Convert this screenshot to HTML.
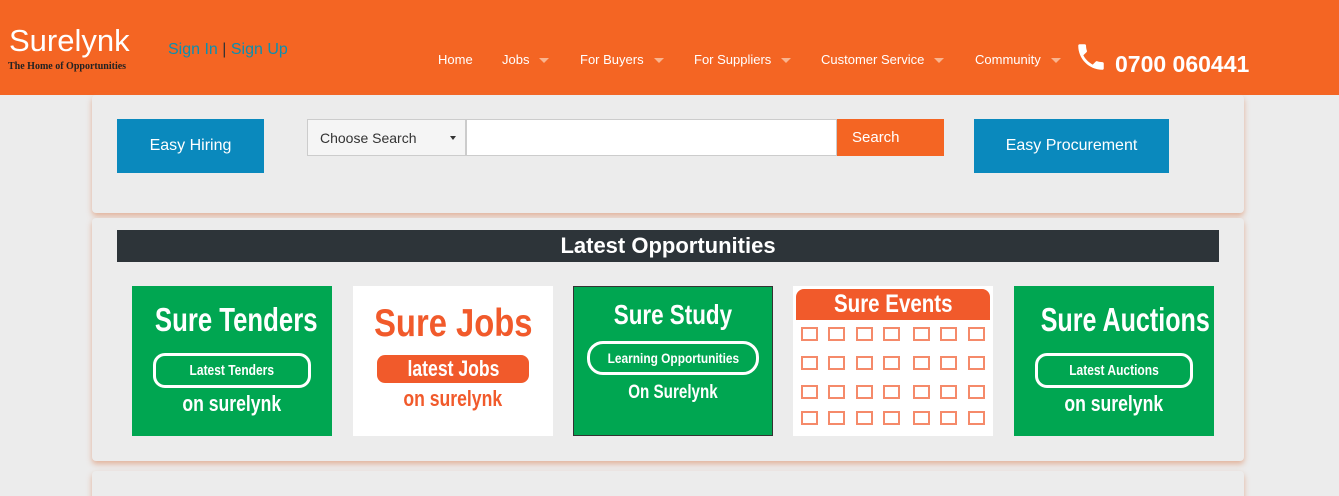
<!DOCTYPE html><html><head><style>
*{margin:0;padding:0;box-sizing:border-box}
html,body{width:1339px;height:496px;overflow:hidden}
body{background:#ececec;font-family:"Liberation Sans",sans-serif;position:relative}
.hdr{position:absolute;left:0;top:0;width:1339px;height:95px;background:#f46523}
.abs{position:absolute}
.nav{color:#fff;font-size:13px;top:52px}
.car{display:inline-block;width:0;height:0;border-left:5px solid transparent;border-right:5px solid transparent;border-top:5px solid #f9b48f;margin-left:10px;vertical-align:middle}
.panel{position:absolute;left:92px;width:1152px;background:#ececec;border-radius:4px;box-shadow:0 3px 6px rgba(220,140,100,.6)}
.tile{position:absolute;top:286px;width:200px;height:150px;text-align:center;font-weight:bold;color:#fff;overflow:hidden;white-space:nowrap}
.tile>div{display:block}
.n{display:inline-block;transform:scaleX(.8);transform-origin:center}
.g{background:#00a651}
.pill{margin:0 auto;border:3px solid #fff;border-radius:12px;font-size:15px}
.cell{position:absolute;width:17px;height:14px;border:2px solid #f58a6a}
</style></head><body>
<div class="hdr"></div>
<div class="abs" style="left:9px;top:23px;color:#fff;font-size:31px;">Surelynk</div>
<div class="abs" style="left:8px;top:61px;color:#222;font-size:10px;font-family:'Liberation Serif',serif;font-weight:bold">The Home of Opportunities</div>
<div class="abs" style="left:168px;top:41px;font-size:16px;color:#0a8fb0">Sign In <span style="color:#333">|</span> Sign Up</div>
<div class="abs nav" style="left:438px">Home</div>
<div class="abs nav" style="left:502px">Jobs<span class="car"></span></div>
<div class="abs nav" style="left:580px">For Buyers<span class="car"></span></div>
<div class="abs nav" style="left:694px">For Suppliers<span class="car"></span></div>
<div class="abs nav" style="left:821px">Customer Service<span class="car"></span></div>
<div class="abs nav" style="left:975px">Community<span class="car"></span></div>
<svg class="abs" style="left:1074px;top:40px" width="34" height="34" viewBox="0 0 24 24"><path fill="#fff" d="M6.6 10.8c1.4 2.8 3.8 5.1 6.6 6.6l2.2-2.2c.3-.3.7-.4 1-.2 1.1.4 2.3.6 3.6.6.6 0 1 .4 1 1V20c0 .6-.4 1-1 1C10.6 21 3 13.4 3 4c0-.6.4-1 1-1h3.5c.6 0 1 .4 1 1 0 1.3.2 2.5.6 3.6.1.3 0 .7-.2 1z"/></svg>
<div class="abs" style="left:1115px;top:51px;color:#fff;font-size:23px;font-weight:bold">0700 060441</div>

<div class="panel" style="top:95px;height:118px"></div>
<div class="abs" style="left:117px;top:119px;width:147px;height:54px;background:#0a89bd;color:#fff;font-size:16px;line-height:54px;text-align:center">Easy Hiring</div>
<div class="abs" style="left:307px;top:119px;width:159px;height:37px;background:#f5f5f5;border:1px solid #ccc;font-size:14px;color:#333;line-height:36px;padding-left:12px">Choose Search<span style="position:absolute;right:9px;top:16px;border-left:3px solid transparent;border-right:3px solid transparent;border-top:4px solid #333"></span></div>
<div class="abs" style="left:466px;top:119px;width:371px;height:37px;background:#fff;border:1px solid #ccc"></div>
<div class="abs" style="left:837px;top:119px;width:107px;height:37px;background:#f46523;color:#fff;font-size:15px;line-height:37px;padding-left:15px">Search</div>
<div class="abs" style="left:974px;top:119px;width:195px;height:54px;background:#0a89bd;color:#fff;font-size:16px;line-height:54px;text-align:center">Easy Procurement</div>

<div class="panel" style="top:218px;height:243px"></div>
<div class="abs" style="left:117px;top:230px;width:1102px;height:32px;background:#2d3439;color:#fff;font-size:22px;font-weight:bold;text-align:center;line-height:32px">Latest Opportunities</div>

<div class="tile g" style="left:132px"><div style="font-size:33px;margin-top:15px;line-height:38px"><span class="n" style="transform:scaleX(.78)">Sure Tenders</span></div><div class="pill" style="width:158px;height:35px;line-height:29px;margin-top:14px"><span class="n">Latest Tenders</span></div><div style="font-size:22px;margin-top:3px"><span class="n">on surelynk</span></div></div>
<div class="tile" style="left:353px;background:#fff;color:#f15a2b"><div style="font-size:39px;margin-top:17px;line-height:42px"><span class="n" style="transform:scaleX(.84)">Sure Jobs</span></div><div style="margin:10px auto 0;width:152px;height:28px;background:#f15a2b;color:#fff;border-radius:8px;font-size:22px;line-height:28px"><span class="n">latest Jobs</span></div><div style="font-size:22px;margin-top:3px"><span class="n">on surelynk</span></div></div>
<div class="tile g" style="left:573px;border:1px solid #333"><div style="font-size:28px;margin-top:12px;line-height:32px"><span class="n">Sure Study</span></div><div class="pill" style="width:172px;height:34px;line-height:28px;margin-top:10px;font-size:14px;border-radius:16px"><span class="n" style="transform:scaleX(.85)">Learning Opportunities</span></div><div style="font-size:19px;margin-top:7px"><span class="n">On Surelynk</span></div></div>
<div class="tile" style="left:793px;background:#fff"><div style="margin:3px 3px 0;height:31px;background:#f15a2b;border-radius:8px 8px 0 0;font-size:25px;line-height:31px"><span class="n" style="transform:scaleX(.82)">Sure Events</span></div></div>
<div class="tile g" style="left:1014px"><div style="font-size:33px;margin-top:15px;line-height:38px"><span class="n" style="transform:scaleX(.76)">Sure Auctions</span></div><div class="pill" style="width:158px;height:35px;line-height:29px;margin-top:14px"><span class="n">Latest Auctions</span></div><div style="font-size:22px;margin-top:3px"><span class="n">on surelynk</span></div></div>
<div id="cells"></div>
<script>
var h='';var xs=[801,828,856,883,913,940,968],ys=[327,356,385,411];
ys.forEach(function(y){xs.forEach(function(x){h+='<div class="cell" style="left:'+x+'px;top:'+y+'px"></div>'})});
document.getElementById('cells').innerHTML=h;
</script>
<div class="panel" style="top:471px;height:40px"></div>
</body></html>
